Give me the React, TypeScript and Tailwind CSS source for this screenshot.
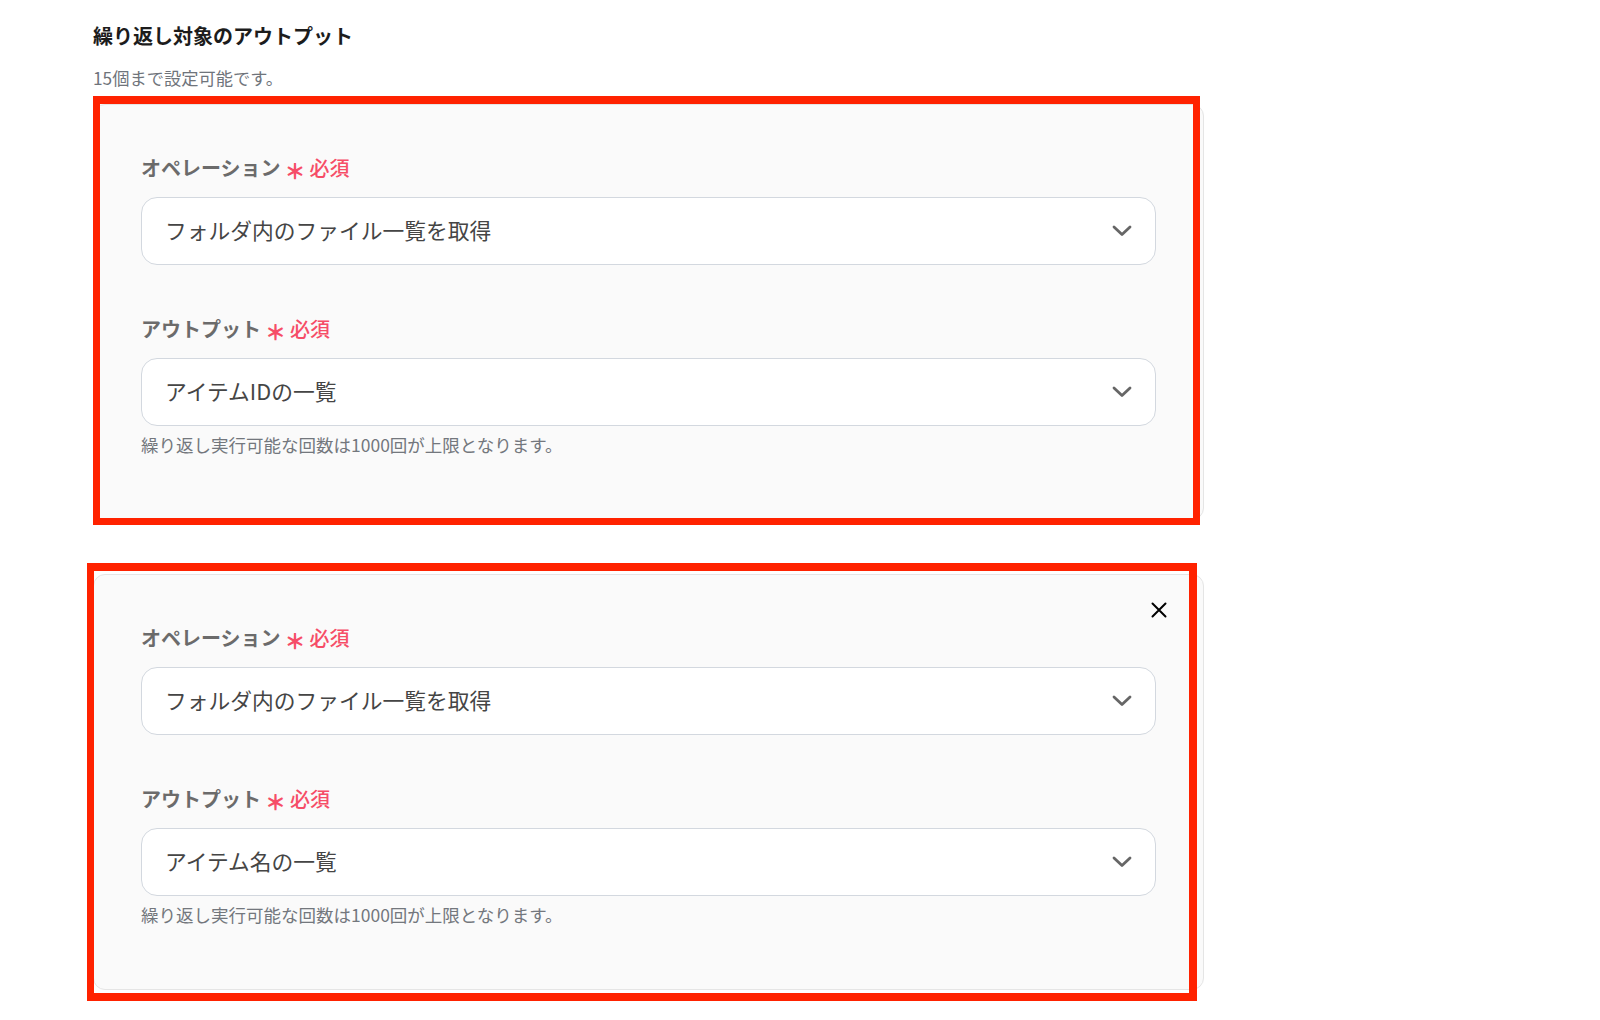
import { type ReactNode } from "react";

type FieldProps = { label: string; value: string };

function Chevron() {
  return (
    <svg width="20" height="12" viewBox="0 0 20 12" fill="none" className="shrink-0">
      <polyline
        points="2,2 10,9.5 18,2"
        stroke="#666666"
        strokeWidth="2.8"
        strokeLinecap="round"
        strokeLinejoin="round"
      />
    </svg>
  );
}

function Required() {
  return (
    <span className="ml-[4px] flex items-center font-medium text-[#f64d67]">
      <span className="relative top-[2px] text-[21px] font-black">＊</span>
      <span className="ml-[4px]">必須</span>
    </span>
  );
}

function Field({ label, value }: FieldProps) {
  return (
    <div>
      <div className="flex h-[28px] items-center text-[20px] leading-[28px] font-semibold text-[#6b6b6b]">
        <span>{label}</span>
        <Required />
      </div>
      <div className="mt-[15px] flex h-[68px] items-center justify-between rounded-[16px] border border-[#d3d8df] bg-white pl-[23px] pr-[23px]">
        <span className="relative -top-px text-[21.75px] text-[#454545]">{value}</span>
        <Chevron />
      </div>
    </div>
  );
}

function Card({ children, removable }: { children: ReactNode; removable?: boolean }) {
  return (
    <div className="relative w-[1111px] rounded-[12px] border border-[#e5e5e5] bg-[#fafafa] px-[47px] pt-[49px] pb-[62px]">
      {removable && (
        <button className="absolute right-[36px] top-[27px] text-black">
          <svg width="16" height="16" viewBox="0 0 16 16" fill="none">
            <path d="M1.5 1.5 14.5 14.5M14.5 1.5 1.5 14.5" stroke="currentColor" strokeWidth="2" strokeLinecap="round" />
          </svg>
        </button>
      )}
      {children}
    </div>
  );
}

function LoopOutput({ output }: { output: string }) {
  return (
    <>
      <Field label="オペレーション" value="フォルダ内のファイル一覧を取得" />
      <div className="mt-[50px]">
        <Field label="アウトプット" value={output} />
      </div>
      <p className="mt-[7px] text-[17.5px] leading-[24px] text-[#73777d]">
        繰り返し実行可能な回数は1000回が上限となります。
      </p>
    </>
  );
}

export default function App() {
  return (
    <div className="relative min-h-screen bg-white pl-[93px] pt-[22px] pb-10 font-['Noto_Sans_CJK_JP','Noto_Sans',sans-serif]">
      <h2 className="text-[20px] leading-[28px] font-bold text-[#1c1c1c]">繰り返し対象のアウトプット</h2>
      <p className="mt-[16px] text-[17.25px] leading-[24px] text-[#6f747b]">15個まで設定可能です。</p>

      <div className="mt-[14px] flex flex-col gap-[54px]">
        <Card>
          <LoopOutput output="アイテムIDの一覧" />
        </Card>
        <Card removable>
          <LoopOutput output="アイテム名の一覧" />
        </Card>
      </div>

      {/* annotation boxes */}
      <div className="pointer-events-none absolute left-[93px] top-[96px] h-[429px] w-[1107px] border-[7px] border-t-[8px] border-[#ff2200]" />
      <div className="pointer-events-none absolute left-[87px] top-[563px] h-[438px] w-[1110px] border-[8px] border-l-[7px] border-[#ff2200]" />
    </div>
  );
}
